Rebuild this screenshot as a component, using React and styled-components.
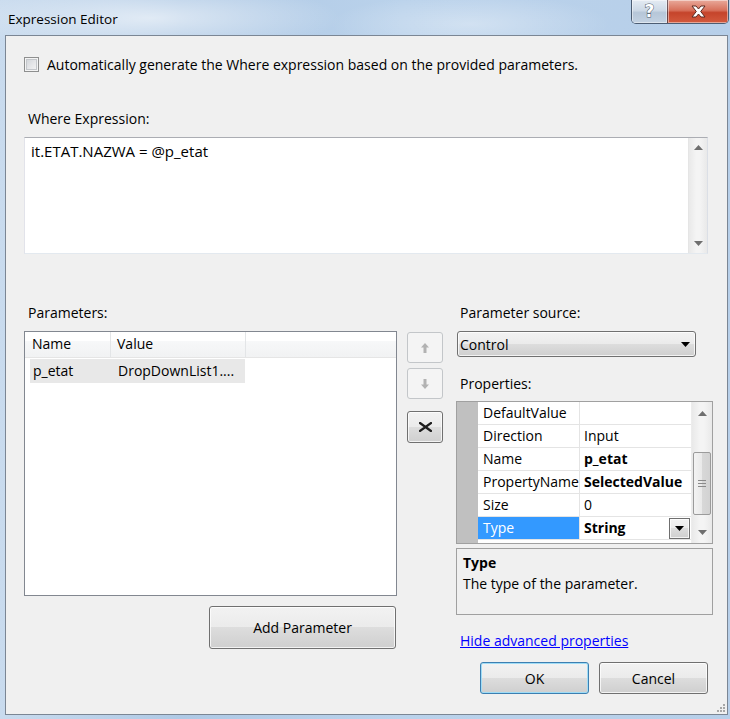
import React from 'react';
import styled, { createGlobalStyle, css } from 'styled-components';

const GlobalStyle = createGlobalStyle`
  html, body {
    margin: 0;
    padding: 0;
  }
  body {
    font-family: "Open Sans", "Noto Sans", sans-serif;
    font-size: 14px;
    color: #000;
  }
`;

const win7Button = css`
  box-sizing: border-box;
  border: 1px solid #707070;
  border-radius: 3px;
  background: linear-gradient(#f2f2f2 0%, #ebebeb 49%, #dddddd 50%, #cfcfcf 100%);
  box-shadow: inset 0 0 0 1px rgba(255, 255, 255, 0.75);
  font: inherit;
  color: #000;
  display: flex;
  align-items: center;
  justify-content: center;
  padding: 0;
`;

const Window = styled.div`
  width: 730px;
  height: 719px;
  box-sizing: border-box;
  display: flex;
  flex-direction: column;
  padding: 0 2px 4px 5px;
  overflow: hidden;
  background:
    radial-gradient(ellipse 190px 36px at 150px 18px, rgba(255, 255, 255, 0.6), transparent),
    radial-gradient(ellipse 140px 30px at 470px 24px, rgba(255, 255, 255, 0.35), transparent),
    linear-gradient(to right, #c9dbee 0%, #afc9e5 25%, #bad2eb 55%, #b7cfe9 100%);
`;

const TitleBar = styled.div`
  height: 35px;
  display: flex;
  justify-content: space-between;
  align-items: flex-start;
`;

const Title = styled.div`
  padding: 10px 0 0 3px;
  font-size: 13.5px;
  line-height: 18px;
  color: #000;
`;

const CaptionButtons = styled.div`
  display: flex;
  border: 1px solid rgba(40, 55, 75, 0.75);
  border-top: none;
  border-radius: 0 0 5px 5px;
  overflow: hidden;
  margin-right: -1px;
`;

const CaptionButton = styled.div`
  width: ${(p) => (p.$close ? '60px' : '35px')};
  height: 23px;
  display: flex;
  align-items: center;
  justify-content: center;
  background: ${(p) =>
    p.$close
      ? 'linear-gradient(#e9a99b 0%, #d7705b 45%, #c5442b 55%, #d35a3e 100%)'
      : 'linear-gradient(#e4ebf3 0%, #cdd9e6 45%, #b6c6d8 55%, #c3d2e2 100%)'};
  box-shadow: inset 0 0 0 1px rgba(255, 255, 255, 0.45);
  & + & {
    border-left: 1px solid rgba(40, 55, 75, 0.6);
  }
`;

const HelpGlyph = styled.span`
  font-family: "DejaVu Sans", sans-serif;
  font-weight: bold;
  font-size: 17px;
  line-height: 1;
  color: #fff;
  -webkit-text-stroke: 1px #4d5a68;
  paint-order: stroke fill;
`;

const Client = styled.div`
  position: relative;
  flex: 1;
  display: flex;
  flex-direction: column;
  border: 1px solid #7b8694;
  background: #f0f0f0;
  padding: 19px 0 0 18px;
`;

const CheckRow = styled.label`
  display: flex;
  align-items: center;
  gap: 8px;
  height: 18px;
`;

const CheckBox = styled.span`
  box-sizing: border-box;
  width: 15px;
  height: 15px;
  border: 1px solid #8e8f8f;
  background: linear-gradient(135deg, #cdd1d6 0%, #e6e7e9 55%, #f6f6f6 100%);
  box-shadow: inset 0 0 0 1px #f4f4f4, inset 0 0 0 2px #c4c7cb;
`;

const Label = styled.div`
  line-height: 18px;
  padding-left: 4px;
  margin-top: ${(p) => p.$mt || 0}px;
`;

const TextBox = styled.div`
  box-sizing: border-box;
  margin-top: 9px;
  width: 684px;
  height: 117px;
  display: flex;
  background: #fff;
  border: 1px solid;
  border-color: #abadb3 #dbdfe6 #e3e9ef #e2e3ea;
`;

const TextContent = styled.div`
  flex: 1;
  padding: 4px 6px;
  font-size: 15px;
  line-height: 18px;
`;

const VScroll = styled.div`
  box-sizing: border-box;
  width: 19px;
  display: flex;
  flex-direction: column;
  justify-content: space-between;
  align-items: center;
  background: linear-gradient(to right, #e9e9e9, #f4f4f4 40%, #f4f4f4 60%, #e9e9e9);
  border-left: 1px solid #e5e5e5;
  padding: 7px 0;
`;

const ScrollArrow = ({ down }) => (
  <svg width="9" height="5" viewBox="0 0 9 5" style={{ transform: down ? 'rotate(180deg)' : 'none' }}>
    <path d="M0 5 L4.5 0 L9 5 Z" fill="#6f6f6f" />
  </svg>
);

const Lower = styled.div`
  margin-top: 50px;
  display: flex;
  align-items: flex-start;
`;

const LeftCol = styled.div`
  width: 373px;
  display: flex;
  flex-direction: column;
`;

const ListBox = styled.div`
  box-sizing: border-box;
  margin-top: 9px;
  height: 265px;
  border: 1px solid #828790;
  background: #fff;
`;

const ListHeader = styled.div`
  display: flex;
  height: 26px;
  box-sizing: border-box;
  background: linear-gradient(#ffffff 0%, #ffffff 35%, #f7f8f9 36%, #f1f2f3 100%);
  border-bottom: 1px solid #e5e5e5;
`;

const HeaderCell = styled.div`
  box-sizing: border-box;
  width: ${(p) => (p.$w ? `${p.$w}px` : 'auto')};
  flex: ${(p) => (p.$w ? 'none' : 1)};
  padding-left: ${(p) => p.$pl || 0}px;
  line-height: 24px;
  border-right: ${(p) => (p.$w ? '1px solid #e3e5e7' : 'none')};
`;

const ListRow = styled.div`
  display: flex;
  width: 215px;
  height: 24px;
  margin: 1px 0 0 5px;
  background: ${(p) => (p.$selected ? '#e8e8e8' : 'transparent')};
  line-height: 24px;
`;

const ListCell = styled.div`
  box-sizing: border-box;
  width: ${(p) => p.$w}px;
  padding-left: ${(p) => p.$pl}px;
  white-space: nowrap;
`;

const AddButton = styled.button`
  ${win7Button};
  align-self: flex-end;
  margin: 10px 1px 0 0;
  width: 187px;
  height: 43px;
`;

const MidCol = styled.div`
  width: 36px;
  margin-left: 10px;
  padding-top: 28px;
  display: flex;
  flex-direction: column;
`;

const SideButton = styled.button`
  ${win7Button};
  height: ${(p) => (p.$tall ? 32 : 31)}px;
  margin-top: ${(p) => p.$mt || 0}px;
  ${(p) =>
    p.disabled &&
    css`
      border-color: #c3c6c9;
      background: #f4f4f4;
      box-shadow: none;
    `}
`;

const Arrow = ({ down }) => (
  <svg width="8" height="10" viewBox="0 0 8 10" style={{ transform: down ? 'rotate(180deg)' : 'none' }}>
    <path d="M4 0 L8 4.5 L5.5 4.5 L5.5 10 L2.5 10 L2.5 4.5 L0 4.5 Z" fill="#b2b2b2" />
  </svg>
);

const CrossIcon = () => (
  <svg width="13" height="10" viewBox="0 0 13 10">
    <path d="M1 1 L12 9 M12 1 L1 9" stroke="#1e1e1e" strokeWidth="2.2" strokeLinecap="square" />
  </svg>
);

const RightCol = styled.div`
  width: 257px;
  margin-left: 13px;
  display: flex;
  flex-direction: column;
`;

const Combo = styled.div`
  ${win7Button};
  justify-content: space-between;
  margin: 9px 0 0 1px;
  width: 239px;
  height: 26px;
  padding: 0 5px 0 2px;
`;

const ComboArrow = () => (
  <svg width="9" height="5" viewBox="0 0 9 5">
    <path d="M0 0 L9 0 L4.5 5 Z" fill="#000" />
  </svg>
);

const PropGrid = styled.div`
  box-sizing: border-box;
  margin-top: 8px;
  height: 143px;
  display: flex;
  border: 1px solid #a0a0a0;
  background: #fff;
`;

const Gutter = styled.div`
  width: 21px;
  background: #c0c0c0;
`;

const PropTable = styled.div`
  flex: 1;
  display: flex;
  flex-direction: column;
`;

const PropRow = styled.div`
  display: grid;
  grid-template-columns: 102px 1fr;
  height: 23px;
  box-sizing: border-box;
  border-bottom: 1px solid #e4e4e4;
`;

const PropName = styled.div`
  padding-left: 5px;
  line-height: 22px;
  border-right: 1px solid #e4e4e4;
  white-space: nowrap;
  overflow: hidden;
  background: ${(p) => (p.$selected ? '#3399ff' : 'transparent')};
  color: ${(p) => (p.$selected ? '#fff' : '#000')};
`;

const PropValue = styled.div`
  display: flex;
  justify-content: space-between;
  align-items: center;
  padding-left: 4px;
  line-height: 22px;
  font-weight: ${(p) => (p.$bold ? 700 : 400)};
  white-space: nowrap;
  overflow: hidden;
`;

const CellDrop = styled.div`
  ${win7Button};
  width: 21px;
  height: 21px;
  border-radius: 0;
  border-color: #6f6f6f;
  margin-right: 1px;
`;

const GridScroll = styled.div`
  width: 20px;
  display: flex;
  flex-direction: column;
  align-items: center;
  background: linear-gradient(to right, #e9e9e9, #f4f4f4 40%, #f4f4f4 60%, #e9e9e9);
  border-left: 1px solid #ececec;
  padding: 9px 0 8px;
`;

const Thumb = styled.div`
  box-sizing: border-box;
  width: 18px;
  height: 63px;
  margin: 36px 0 auto;
  border: 1px solid #9b9b9b;
  border-radius: 2px;
  background: linear-gradient(to right, #f3f3f3, #e9e9e9 50%, #d8d8d8 51%, #d2d2d2);
  display: flex;
  align-items: center;
  justify-content: center;
`;

const Grip = () => (
  <svg width="8" height="7" viewBox="0 0 8 7">
    <path d="M0 0.5 H8 M0 3.5 H8 M0 6.5 H8" stroke="#8a8a8a" strokeWidth="1" />
  </svg>
);

const Description = styled.div`
  box-sizing: border-box;
  margin-top: 4px;
  height: 67px;
  border: 1px solid #a0a0a0;
  padding: 3px 6px;
  line-height: 21px;
`;

const DescTitle = styled.div`
  font-weight: 700;
`;

const Link = styled.a`
  margin-top: 17px;
  padding-left: 4px;
  line-height: 18px;
  color: #0000ff;
  text-decoration: underline;
  cursor: pointer;
`;

const Footer = styled.div`
  margin-top: 12px;
  padding-right: 19px;
  display: flex;
  justify-content: flex-end;
  gap: 10px;
`;

const DialogButton = styled.button`
  ${win7Button};
  width: 109px;
  height: 32px;
  ${(p) =>
    p.$default &&
    css`
      border-color: #3c7fb1;
      box-shadow: inset 0 0 0 1px #9fdcf6;
    `}
`;

const ResizeGrip = styled.svg`
  position: absolute;
  right: 2px;
  bottom: 2px;
`;

const properties = [
  { name: 'DefaultValue', value: '' },
  { name: 'Direction', value: 'Input' },
  { name: 'Name', value: 'p_etat', bold: true },
  { name: 'PropertyName', value: 'SelectedValue', bold: true },
  { name: 'Size', value: '0' },
  { name: 'Type', value: 'String', bold: true, selected: true, drop: true },
];

const App = () => (
  <>
    <GlobalStyle />
    <Window>
      <TitleBar>
        <Title>Expression Editor</Title>
        <CaptionButtons>
          <CaptionButton>
            <HelpGlyph>?</HelpGlyph>
          </CaptionButton>
          <CaptionButton $close>
            <svg width="15" height="13" viewBox="0 0 15 13">
              <path
                d="M1 1 H5 L7.5 4 L10 1 H14 L9.7 6.5 L14 12 H10 L7.5 9 L5 12 H1 L5.3 6.5 Z"
                fill="#fff"
                stroke="#5a2a22"
                strokeWidth="1"
                strokeLinejoin="round"
              />
            </svg>
          </CaptionButton>
        </CaptionButtons>
      </TitleBar>

      <Client>
        <CheckRow>
          <CheckBox />
          Automatically generate the Where expression based on the provided parameters.
        </CheckRow>

        <Label $mt={37}>Where Expression:</Label>
        <TextBox>
          <TextContent>it.ETAT.NAZWA = @p_etat</TextContent>
          <VScroll>
            <ScrollArrow />
            <ScrollArrow down />
          </VScroll>
        </TextBox>

        <Lower>
          <LeftCol>
            <Label>Parameters:</Label>
            <ListBox>
              <ListHeader>
                <HeaderCell $w={86} $pl={7}>Name</HeaderCell>
                <HeaderCell $w={135} $pl={6}>Value</HeaderCell>
                <HeaderCell />
              </ListHeader>
              <ListRow $selected>
                <ListCell $w={81} $pl={3}>p_etat</ListCell>
                <ListCell $w={134} $pl={7}>DropDownList1....</ListCell>
              </ListRow>
            </ListBox>
            <AddButton>Add Parameter</AddButton>
          </LeftCol>

          <MidCol>
            <SideButton disabled>
              <Arrow />
            </SideButton>
            <SideButton disabled $mt={5}>
              <Arrow down />
            </SideButton>
            <SideButton $mt={12} $tall>
              <CrossIcon />
            </SideButton>
          </MidCol>

          <RightCol>
            <Label>Parameter source:</Label>
            <Combo>
              <span>Control</span>
              <ComboArrow />
            </Combo>
            <Label $mt={18}>Properties:</Label>
            <PropGrid>
              <Gutter />
              <PropTable>
                {properties.map((prop) => (
                  <PropRow key={prop.name}>
                    <PropName $selected={prop.selected}>{prop.name}</PropName>
                    <PropValue $bold={prop.bold}>
                      <span>{prop.value}</span>
                      {prop.drop && (
                        <CellDrop>
                          <ComboArrow />
                        </CellDrop>
                      )}
                    </PropValue>
                  </PropRow>
                ))}
              </PropTable>
              <GridScroll>
                <ScrollArrow />
                <Thumb>
                  <Grip />
                </Thumb>
                <ScrollArrow down />
              </GridScroll>
            </PropGrid>
            <Description>
              <DescTitle>Type</DescTitle>
              <div>The type of the parameter.</div>
            </Description>
            <Link>Hide advanced properties</Link>
          </RightCol>
        </Lower>

        <Footer>
          <DialogButton $default>OK</DialogButton>
          <DialogButton>Cancel</DialogButton>
        </Footer>

        <ResizeGrip width="9" height="9" viewBox="0 0 9 9">
          <g fill="#a7a7a7">
            <rect x="7" y="1" width="2" height="2" />
            <rect x="4" y="4" width="2" height="2" />
            <rect x="7" y="4" width="2" height="2" />
            <rect x="1" y="7" width="2" height="2" />
            <rect x="4" y="7" width="2" height="2" />
            <rect x="7" y="7" width="2" height="2" />
          </g>
        </ResizeGrip>
      </Client>
    </Window>
  </>
);

export default App;
